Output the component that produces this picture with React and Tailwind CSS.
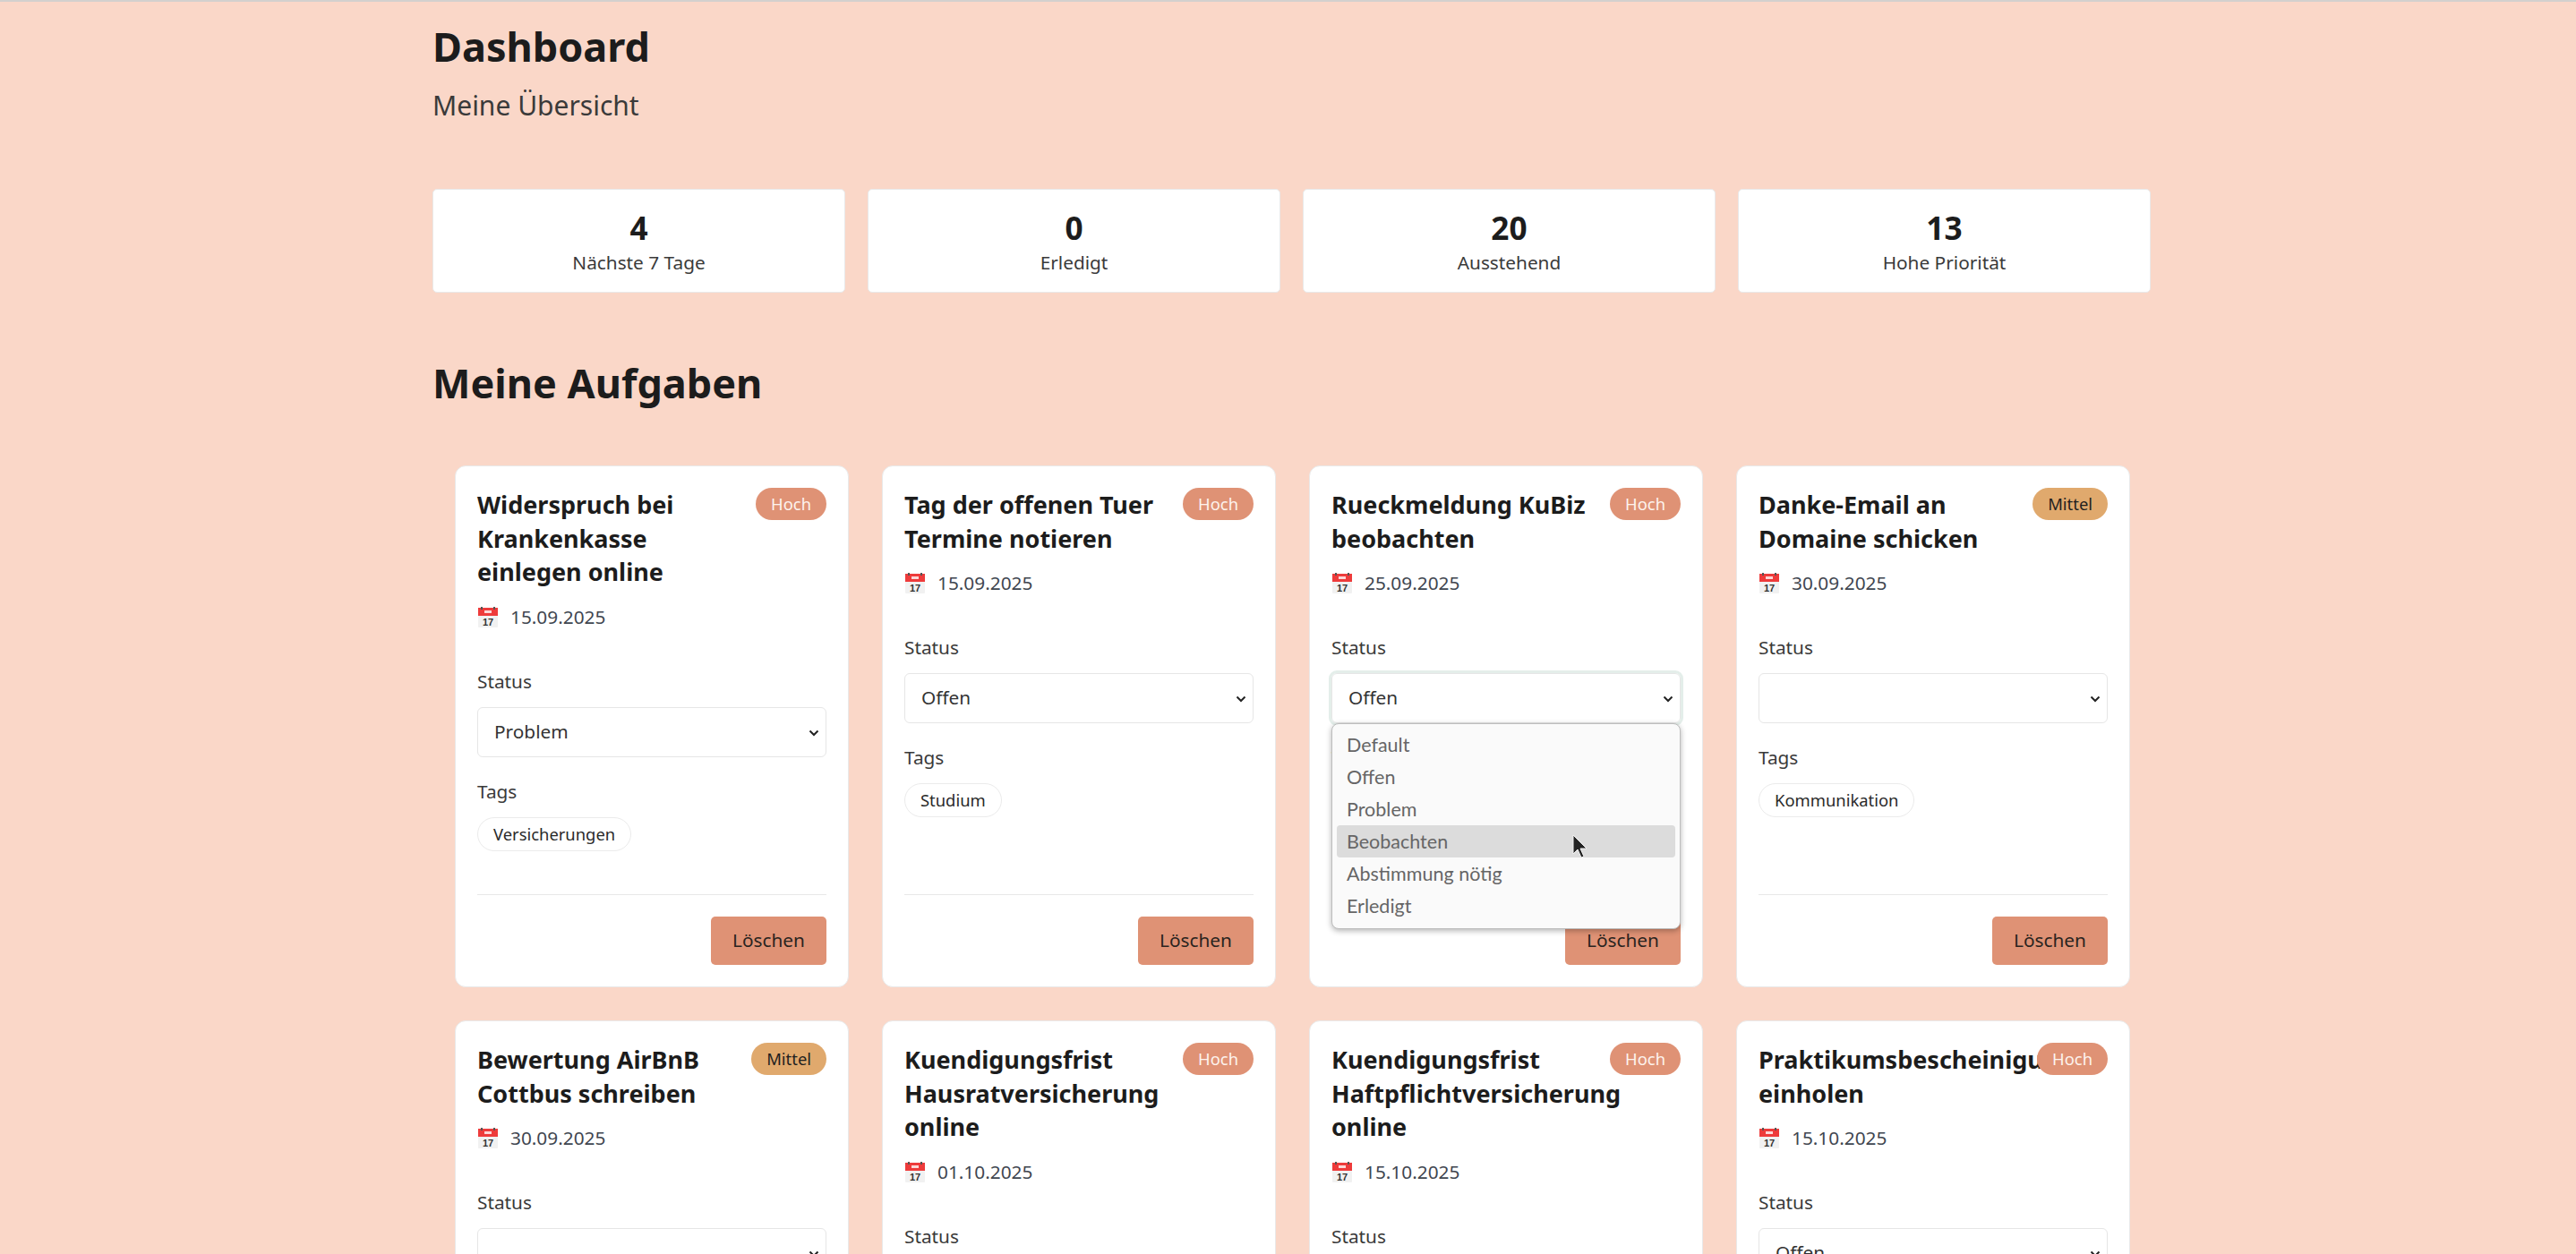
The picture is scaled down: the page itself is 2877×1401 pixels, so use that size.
import React from "react";

const Calendar = () => (
  <svg width="24" height="24" viewBox="0 0 24 24" className="shrink-0">
    <rect x="1" y="1" width="22" height="22" rx="1" fill="#f1f1f1" />
    <rect x="1" y="1" width="22" height="9" fill="#ee3b3b" />
    <rect x="4" y="0" width="2" height="3" fill="#555" />
    <rect x="18" y="0" width="2" height="3" fill="#555" />
    <rect x="8" y="4" width="8" height="3" fill="#fff" opacity="0.8" />
    <text x="12" y="21" textAnchor="middle" fontSize="11" fontWeight="700" fill="#333" fontFamily="'Liberation Sans', sans-serif">17</text>
  </svg>
);

const Chevron = () => (
  <svg width="14" height="10" viewBox="0 0 14 10" className="absolute right-[7px] top-1/2 -mt-[4px] pointer-events-none">
    <path d="M2.5 2.5 7 7l4.5-4.5" fill="none" stroke="#222" strokeWidth="2" />
  </svg>
);

const Badge = ({ p }) => (
  <span
    className={
      p === "Hoch"
        ? "shrink-0 ml-auto h-[36px] px-[17px] rounded-[18px] bg-[#df9275] text-[#fdf3ee] text-[18.4px] leading-[36px] whitespace-nowrap"
        : "shrink-0 ml-auto h-[36px] px-[17px] rounded-[18px] bg-[#e0a96d] text-[#1f1f1f] text-[18.4px] leading-[36px] whitespace-nowrap"
    }
  >
    {p}
  </span>
);

const options = ["", "Default", "Offen", "Problem", "Beobachten", "Abstimmung nötig", "Erledigt"];

const Dropdown = () => (
  <div className="absolute left-0 right-0 top-[56px] z-10 h-[230px] box-border rounded-[8px] border border-[#bdbdbd] bg-[#fafafa] shadow-[0_2px_6px_rgba(0,0,0,0.3)] px-[5px] py-[5px] font-['Lato','Noto_Sans',sans-serif] text-[21.5px] text-[#666666]">
    {["Default", "Offen", "Problem", "Beobachten", "Abstimmung nötig", "Erledigt"].map((o) => (
      <div
        key={o}
        className={
          o === "Beobachten"
            ? "relative h-[36px] leading-[36px] px-[11px] rounded-[4px] bg-[#dcdcdc]"
            : "h-[36px] leading-[36px] px-[11px] rounded-[4px]"
        }
      >
        {o}
        {o === "Beobachten" && (
          <svg width="18" height="28" viewBox="0 0 18 28" className="absolute left-[263px] top-[10px]">
            <path d="M1 1v21l5-5 4 9 3-1-4-9h7z" fill="#222" stroke="#f2f2f2" strokeWidth="1" />
          </svg>
        )}
      </div>
    ))}
  </div>
);

const Card = ({ title, prio, date, status, tags, open }) => (
  <div className="flex flex-col box-border min-h-[583px] bg-white rounded-[12px] border border-[#e9e9e9] p-[24px]">
    <div className="flex items-start gap-[8px]">
      <h3 className="min-w-0 m-0 text-[27px] leading-[37.5px] font-bold text-[#1c1c1c]">{title}</h3>
      <Badge p={prio} />
    </div>
    <div className="flex items-center gap-[13px] mt-[17px] h-[30px] text-[20.8px] text-[#3f4650]">
      <Calendar />
      <span>{date}</span>
    </div>
    <div className="mt-[42px] text-[20.8px] leading-[28px] text-[#3a3a3a]">Status</div>
    <div className="relative mt-[15px]">
      <select
        defaultValue={status}
        className={
          open
            ? "block w-full h-[56px] box-border appearance-none rounded-[6px] border border-[#e6e6e6] bg-white pl-[18px] pr-[30px] text-[20.8px] text-[#333333] outline-[3px] outline-[#e4eeea] outline-offset-0 font-['Noto_Sans',sans-serif]"
            : "block w-full h-[56px] box-border appearance-none rounded-[6px] border border-[#e6e6e6] bg-white pl-[18px] pr-[30px] text-[20.8px] text-[#333333] font-['Noto_Sans',sans-serif]"
        }
      >
        {options.map((o) => (
          <option key={o} value={o}>{o}</option>
        ))}
      </select>
      <Chevron />
      {open && <Dropdown />}
    </div>
    <div className="mt-[24px] text-[20.8px] leading-[28px] text-[#3a3a3a]">Tags</div>
    <div className="mt-[15px] flex gap-[8px]">
      {tags.map((t) => (
        <span key={t} className="h-[38px] box-border px-[17px] rounded-[19px] border border-[#ebebeb] text-[18.4px] leading-[35px] text-[#2a2a2a] whitespace-nowrap">{t}</span>
      ))}
    </div>
    <div className="mt-auto border-t border-[#e8e8e8] pt-[24px] flex justify-end">
      <button className="h-[54px] w-[129px] rounded-[5px] bg-[#df9275] text-[20.8px] text-[#2a2420]">Löschen</button>
    </div>
  </div>
);

const stats = [
  ["4", "Nächste 7 Tage"],
  ["0", "Erledigt"],
  ["20", "Ausstehend"],
  ["13", "Hohe Priorität"],
];

const tasks = [
  { title: "Widerspruch bei Krankenkasse einlegen online", prio: "Hoch", date: "15.09.2025", status: "Problem", tags: ["Versicherungen"] },
  { title: "Tag der offenen Tuer Termine notieren", prio: "Hoch", date: "15.09.2025", status: "Offen", tags: ["Studium"] },
  { title: "Rueckmeldung KuBiz beobachten", prio: "Hoch", date: "25.09.2025", status: "Offen", tags: ["Bewerbung"], open: true },
  { title: "Danke-Email an Domaine schicken", prio: "Mittel", date: "30.09.2025", status: "", tags: ["Kommunikation"] },
  { title: "Bewertung AirBnB Cottbus schreiben", prio: "Mittel", date: "30.09.2025", status: "", tags: [] },
  { title: "Kuendigungsfrist Hausratversicherung online", prio: "Hoch", date: "01.10.2025", status: "Offen", tags: [] },
  { title: "Kuendigungsfrist Haftpflichtversicherung online", prio: "Hoch", date: "15.10.2025", status: "Offen", tags: [] },
  { title: "Praktikumsbescheinigung einholen", prio: "Hoch", date: "15.10.2025", status: "Offen", tags: [] },
];

export default function App() {
  return (
    <div className="h-[1401px] overflow-hidden bg-[#fad7c8] border-t-2 border-t-[#d3d0ce] font-['Noto_Sans',sans-serif] text-[#1c1c1c]">
      <div className="w-[1919px] ml-[483px] pt-[20px]">
        <h1 className="text-[45px] leading-[60px] font-bold m-0">Dashboard</h1>
        <p className="mt-[14px] text-[30px] leading-[44px] text-[#3a3a3a]">Meine Übersicht</p>
        <div className="mt-[71px] grid grid-cols-4 gap-[25px]">
          {stats.map(([n, l]) => (
            <div key={l} className="h-[116px] box-border rounded-[5px] bg-white border border-[#e9e9e9] flex flex-col items-center pt-[20px]">
              <div className="text-[35.2px] leading-[44px] font-bold">{n}</div>
              <div className="mt-[3px] text-[20.8px] leading-[28px] text-[#3a3a3a]">{l}</div>
            </div>
          ))}
        </div>
        <h2 className="mt-[66px] text-[45px] leading-[70px] font-bold">Meine Aufgaben</h2>
        <div className="mt-[57px] ml-[25px] mr-[23px] grid grid-cols-4 gap-x-[37px] gap-y-[37px]">
          {tasks.map((t) => (
            <Card key={t.title + t.date} {...t} />
          ))}
        </div>
      </div>
    </div>
  );
}
